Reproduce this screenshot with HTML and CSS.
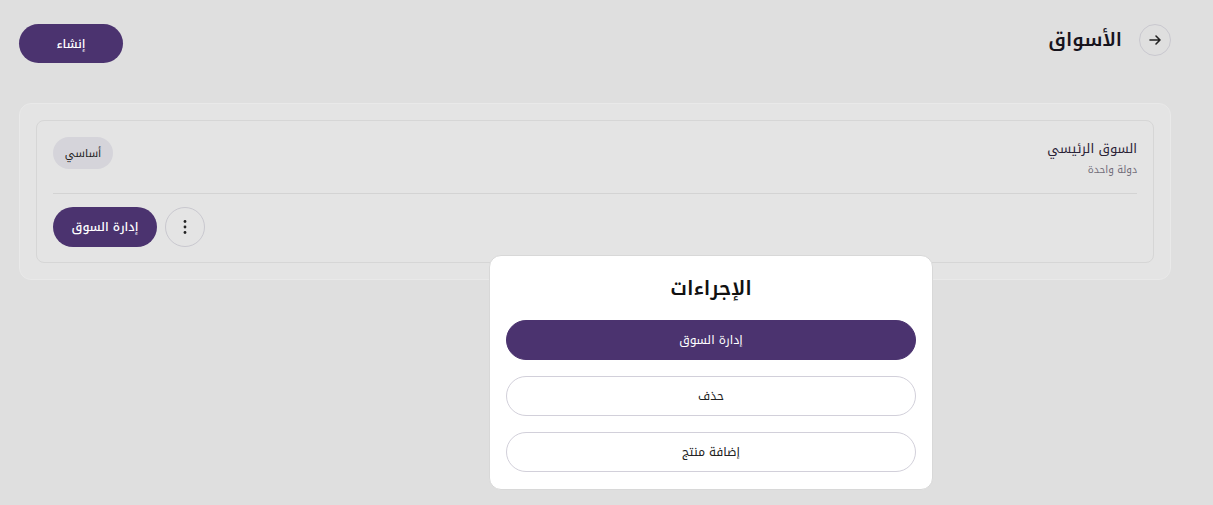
FILE: index.html
```html
<!DOCTYPE html>
<html lang="ar" dir="rtl">
<head>
<meta charset="utf-8">
<link rel="stylesheet" href="styles.css">
</head>
<body>
<div class="page">
  <header class="header">
    <div class="title-group">
      <button class="back-btn" aria-label="رجوع">
        <svg width="14" height="14" viewBox="0 0 14 14"><path d="M2 7h10M8 3l4 4-4 4" fill="none" stroke="#222" stroke-width="1.6" stroke-linecap="round" stroke-linejoin="round"/></svg>
      </button>
      <h1 class="title">الأسواق</h1>
    </div>
    <button class="btn-primary btn-create">إنشاء</button>
  </header>

  <section class="outer-card">
    <div class="market-card">
      <div class="market-top">
        <div class="market-info">
          <div class="market-name">السوق الرئيسي</div>
          <div class="market-sub">دولة واحدة</div>
        </div>
        <span class="badge">أساسي</span>
      </div>
      <div class="divider"></div>
      <div class="market-actions">
        <button class="more-btn" aria-label="المزيد">
          <svg width="4" height="16" viewBox="0 0 4 16"><circle cx="2" cy="2.5" r="1.4" fill="#222"/><circle cx="2" cy="8" r="1.4" fill="#222"/><circle cx="2" cy="13.5" r="1.4" fill="#222"/></svg>
        </button>
        <button class="btn-primary btn-manage">إدارة السوق</button>
      </div>
    </div>
  </section>
</div>

<div class="sheet">
  <h2 class="sheet-title">الإجراءات</h2>
  <div class="sheet-actions">
    <button class="sheet-btn primary">إدارة السوق</button>
    <button class="sheet-btn">حذف</button>
    <button class="sheet-btn">إضافة منتج</button>
  </div>
</div>
</body>
</html>
```

FILE: styles.css
```css
* { box-sizing: border-box; }
html, body { margin: 0; height: 100%; }
body {
  background: #dfdfdf;
  font-family: "Noto Kufi Arabic", "DejaVu Sans", sans-serif;
  color: #1e1a26;
}
button { font-family: inherit; cursor: pointer; }
.page {
  padding: 24px 42px 0 19px;
}
.header {
  display: flex;
  justify-content: space-between;
  align-items: flex-start;
  height: 40px;
}
.title-group {
  display: flex;
  align-items: center;
  gap: 17px;
  height: 32px;
}
.back-btn {
  width: 32px;
  height: 32px;
  border-radius: 50%;
  border: 1px solid #c9c8cf;
  background: transparent;
  display: flex;
  align-items: center;
  justify-content: center;
  padding: 0;
}
.title {
  margin: 0;
  font-size: 19px;
  font-weight: 600;
  line-height: 32px;
  color: #16131c;
}
.btn-primary {
  background: #4b336f;
  color: #fff;
  border: none;
  border-radius: 999px;
  font-size: 12px;
  font-weight: 500;
  height: 39px;
  padding: 0;
}
.btn-create { width: 104px; }
.outer-card {
  margin-top: 39px;
  background: #e4e4e4;
  border: 1px solid #e9e9e9;
  border-radius: 12px;
  padding: 16px;
}
.market-card {
  border: 1px solid #d6d6d6;
  border-radius: 8px;
  padding: 16px 16px 15px;
}
.market-top {
  display: flex;
  justify-content: space-between;
  align-items: flex-start;
  height: 56px;
}
.market-info { padding-top: 2px; display: flex; flex-direction: column; gap: 3px; }
.market-name { font-size: 13px; color: #2a2236; line-height: 20px; }
.market-sub { font-size: 10px; color: #716c79; line-height: 15px; }
.badge {
  background: #d5d4da;
  border-radius: 999px;
  width: 60px;
  height: 32px;
  display: flex;
  align-items: center;
  justify-content: center;
  font-size: 11px;
  color: #222;
}
.divider { height: 1px; background: #d3d3d3; }
.market-actions {
  display: flex;
  justify-content: flex-end;
  gap: 8px;
  margin-top: 12px;
  height: 41px;
  align-items: center;
}
.btn-manage { width: 104px; height: 40px; }
.more-btn {
  width: 40px;
  height: 40px;
  border-radius: 50%;
  border: 1px solid #c9c8cf;
  background: transparent;
  display: flex;
  align-items: center;
  justify-content: center;
  padding: 0;
}
.sheet {
  position: absolute;
  left: 489px;
  top: 255px;
  width: 444px;
  height: 235px;
  background: #fff;
  border: 1px solid #d8d8d8;
  border-radius: 12px;
  padding: 16px 16px 17px;
}
.sheet-title {
  margin: 0;
  text-align: center;
  font-size: 20px;
  font-weight: 600;
  line-height: 32px;
  height: 48px;
  color: #111;
}
.sheet-actions {
  display: flex;
  flex-direction: column;
  gap: 16px;
}
.sheet-btn {
  height: 40px;
  border-radius: 999px;
  border: 1px solid #d2d0da;
  background: #fff;
  font-size: 12px;
  color: #222;
  padding: 0;
}
.sheet-btn.primary {
  background: #4b336f;
  border-color: #4b336f;
  color: #fff;
}
```
